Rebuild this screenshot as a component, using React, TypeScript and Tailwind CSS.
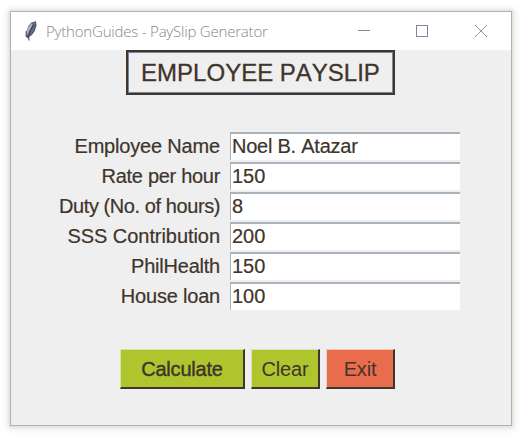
import React from "react";

type Field = { label: string; value: string; track: string; valueTrack: string };

const fields: Field[] = [
  { label: "Employee Name", value: "Noel B. Atazar", track: "tracking-[-0.18px]", valueTrack: "tracking-[-0.24px]" },
  { label: "Rate per hour", value: "150", track: "tracking-[-0.3px]", valueTrack: "" },
  { label: "Duty (No. of hours)", value: "8", track: "tracking-[-0.42px]", valueTrack: "" },
  { label: "SSS Contribution", value: "200", track: "tracking-[-0.06px]", valueTrack: "" },
  { label: "PhilHealth", value: "150", track: "tracking-[-0.22px]", valueTrack: "" },
  { label: "House loan", value: "100", track: "tracking-[-0.2px]", valueTrack: "" },
];

function Feather() {
  return (
    <svg width="12" height="20" viewBox="0 0 12 20" className="ml-[14px] shrink-0">
      <path d="M10.5 0.5 L6.5 1.8 L3 6 L1.2 11 L1 15.5 L3.2 17 L6 14.5 L9.3 10 L11 4.5 Z" fill="#5c6c8c" />
      <path d="M6.5 2.3 L3 6.5 L1.5 12 L1.3 15 L4.2 10.5 L7.8 3.5 Z" fill="#a9b3be" />
      <path d="M10.5 0.5 L11 4.5 L9.3 10 L6 14.5 M1.2 10 L1 15.5 L3 17" fill="none" stroke="#3f332b" strokeWidth="0.8" />
      <path d="M10.5 0.8 L6.5 1.8 L3 6" fill="none" stroke="#5c6c8c" strokeWidth="0.8" />
      <path d="M8.5 3.5 L5 10 L3.6 15 L4 19.5" fill="none" stroke="#3f332b" strokeWidth="1" />
    </svg>
  );
}

function TitleBar() {
  return (
    <header className="flex h-[38px] items-center bg-white">
      <Feather />
      <h1 className="ml-[9px] w-[221px] whitespace-nowrap text-[15px] leading-[20px] font-light tracking-[-0.2px] text-[#81878e] [font-family:'Open_Sans','Noto_Sans',sans-serif]">
        PythonGuides - PaySlip Generator
      </h1>
      <svg width="130" height="14" viewBox="0 0 130 14" className="ml-[91px] shrink-0" fill="none" stroke="#7b889e">
        <path d="M0 6.5H12" />
        <rect x="58.5" y="1.5" width="11" height="11" />
        <path d="M117 1L129 13M129 1L117 13" stroke="#8e99a9" />
      </svg>
    </header>
  );
}

export default function App() {
  return (
    <div className="h-[437px] w-[522px] overflow-hidden bg-white pt-[11px] pl-[10px] text-[#40342b] [font-kerning:none] [font-family:'Liberation_Sans',Arial,sans-serif]">
      <main className="flex h-[415px] w-[502px] flex-col border border-[#a9b3bb] bg-[#efefef] shadow-[0_0_3px_1px_#e3dccc,0_1px_7px_3px_#ededed]">
        <TitleBar />
        <h2 className="ml-[115px] flex h-[45px] w-[269px] items-center justify-center border-2 border-[#40342b] text-[24px] leading-none whitespace-nowrap shadow-[inset_0_0_0_1px_#7686a5] [-webkit-text-stroke:0.3px_#40342b]">
          EMPLOYEE PAYSLIP
        </h2>
        <form className="mt-[37px] flex flex-col gap-[2px] [-webkit-text-stroke:0.2px_#40342b]">
          {fields.map((f) => (
            <div key={f.label} className="flex h-[28px] text-[20px] leading-[28px]">
              <label className={`w-[209px] scale-y-[1.05] text-right whitespace-nowrap ${f.track}`}>{f.label}</label>
              <div className="ml-[10px] h-[28px] w-[230px] border-t-2 border-l border-[#a9b3bd] bg-white">
                <span className={`ml-px block scale-y-[1.05] leading-[25px] whitespace-nowrap ${f.valueTrack}`}>{f.value}</span>
              </div>
            </div>
          ))}
        </form>
        <div className="mt-[39px] ml-[109px] flex gap-[6px] text-[20px] leading-none">
          <button className="h-[40px] w-[125px] border-t border-r-2 border-b-2 border-l border-t-[#dce0a0] border-r-[#40342b] border-b-[#40342b] border-l-[#dce0a0] bg-[#aec52e] tracking-[-0.2px] [-webkit-text-stroke:0.4px_#40342b]">
            <span className="inline-block scale-y-[1.05]">Calculate</span>
          </button>
          <button className="h-[40px] w-[69px] border-t border-r-2 border-b-2 border-l border-t-[#dce0c0] border-r-[#40342b] border-b-[#40342b] border-l-[#dce0c0] bg-[#aec52e] tracking-[-0.2px]">
            <span className="inline-block scale-y-[1.05]">Clear</span>
          </button>
          <button className="h-[40px] w-[69px] border-t border-r-2 border-b-2 border-l border-t-[#efc8ae] border-r-[#40342b] border-b-[#40342b] border-l-[#e0d8c8] bg-[#e96d4d] tracking-[-0.2px]">
            <span className="inline-block scale-y-[1.05]">Exit</span>
          </button>
        </div>
      </main>
    </div>
  );
}
